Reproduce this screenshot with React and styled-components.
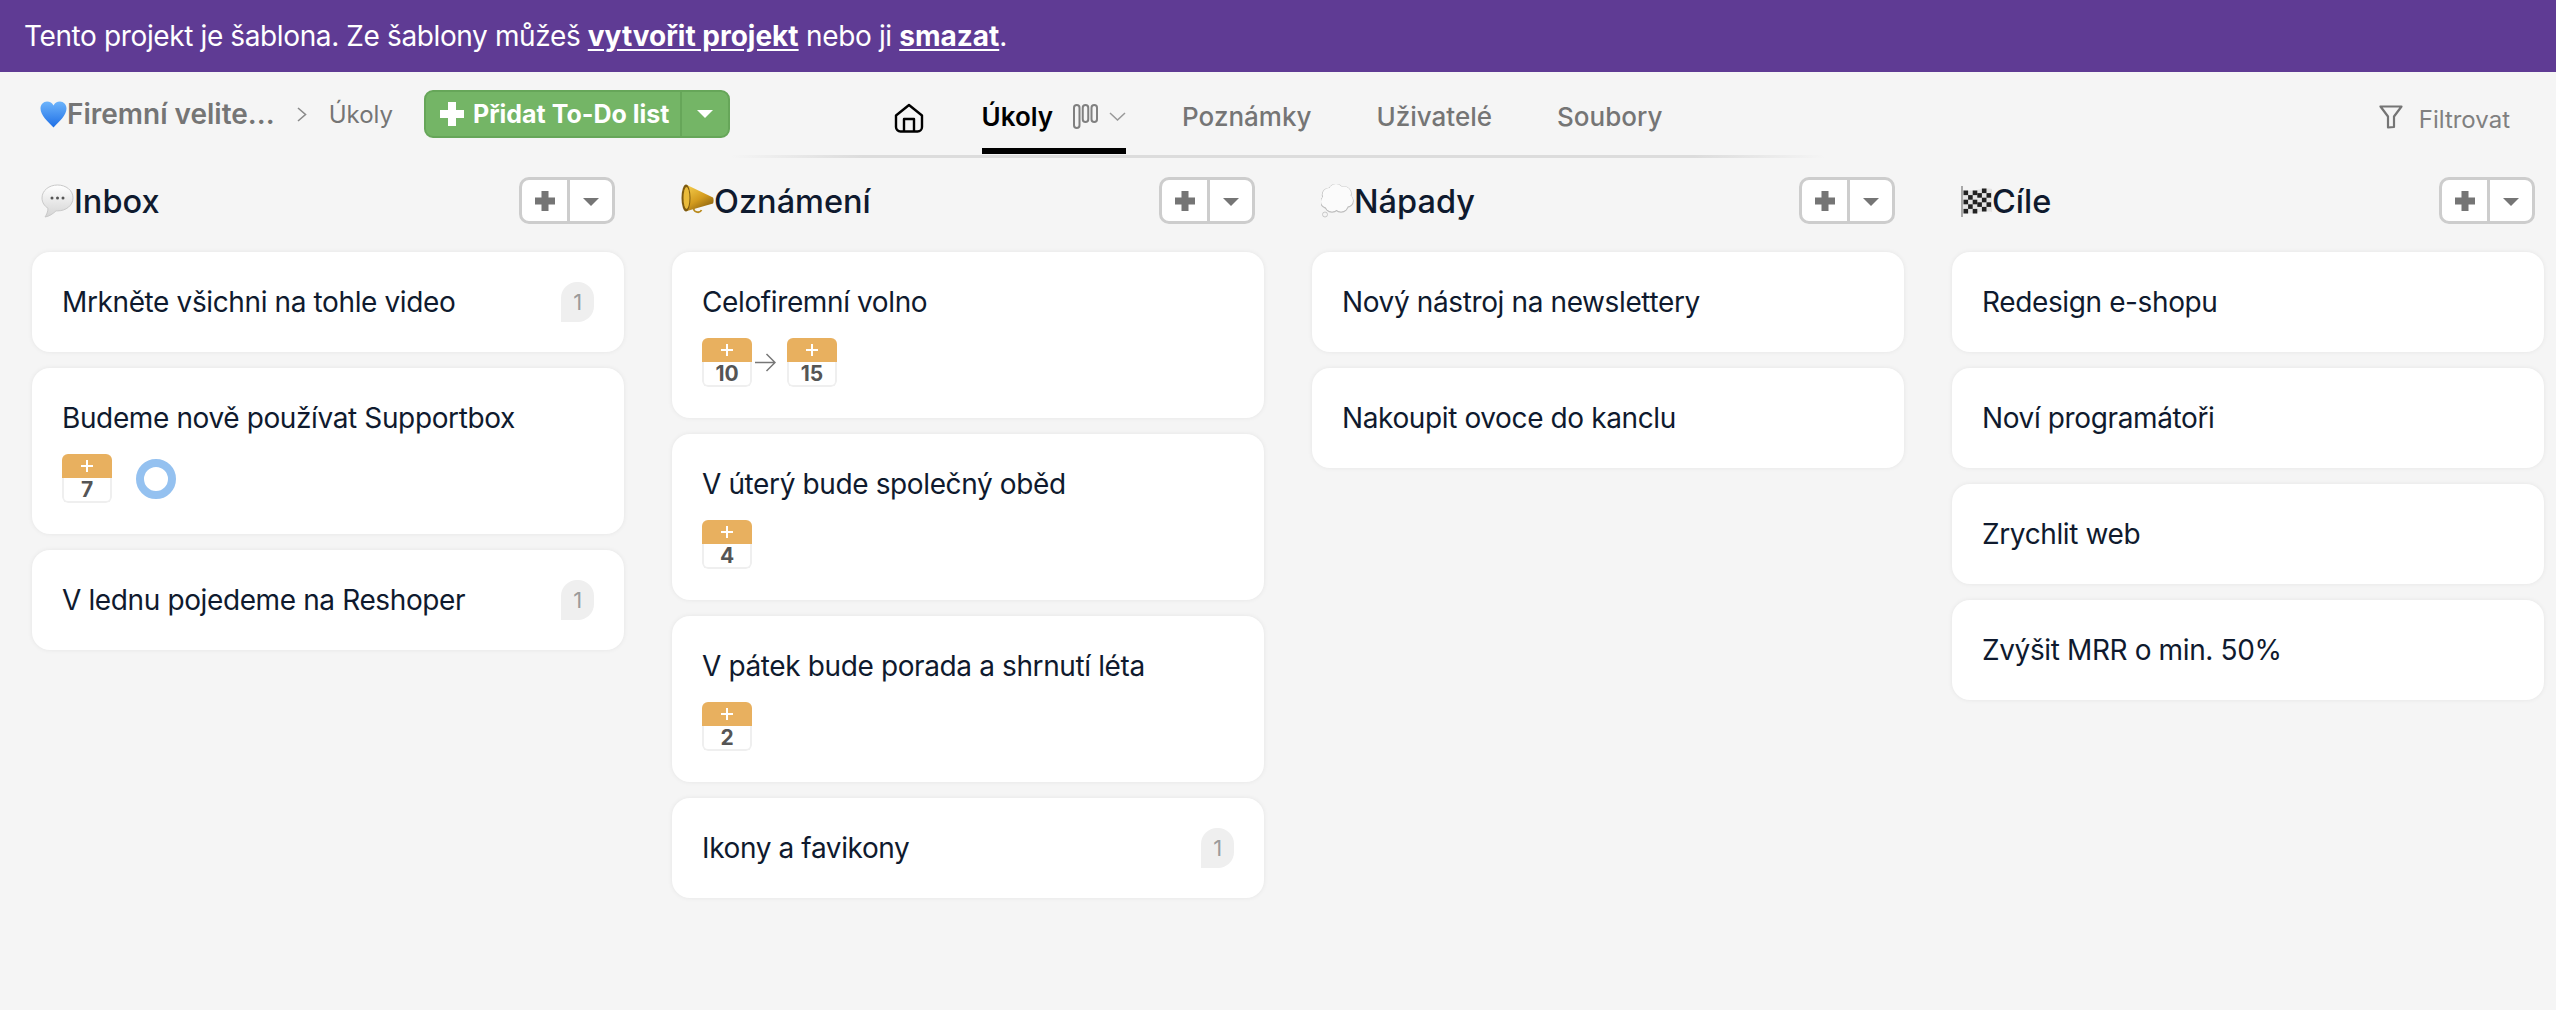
import React from 'react'
import styled, { createGlobalStyle } from 'styled-components'

const GlobalStyle = createGlobalStyle`
html, body {
  margin: 0;
  padding: 0;
  background: #f5f5f5;
  font-family: Inter, "Noto Sans", "Liberation Sans", sans-serif;
}
* { box-sizing: border-box; }
`

const Page = styled.div`
height: 1010px;
overflow: hidden;
background: #f5f5f5;
`

const Banner = styled.div`
height: 72px;
padding: 0 16px 1px 24px;
display: flex;
align-items: center;
background: #5f3b94;
color: #fff;
font-size: 28px;
letter-spacing: -0.38px;
white-space: pre;
`

const BannerLink = styled.a`
font-weight: 700;
letter-spacing: 0;
text-decoration: underline;
text-underline-offset: 3px;
color: #fff;
`

const TopBar = styled.div`
display: grid;
grid-template-columns: 1fr 1094px 1fr;
height: 86px;
`

const LeftGroup = styled.div`
display: flex;
align-items: flex-start;
padding: 18px 0 0 40px;
`

const ProjectName = styled.div`
display: flex;
align-items: center;
height: 48px;
font-size: 28px;
font-weight: 600;
color: #757575;
white-space: nowrap;
`

const Crumb = styled.div`
display: flex;
align-items: center;
height: 48px;
margin-left: 22px;
gap: 22px;
font-size: 24px;
color: #757575;
`

const AddButton = styled.div`
display: flex;
height: 48px;
width: 306px;
margin-left: 31px;
border: 2px solid #66a659;
border-radius: 9px;
background: #74b566;
color: #fff;
`

const AddMain = styled.div`
flex: 1;
display: flex;
align-items: center;
gap: 9px;
padding-left: 14px;
font-size: 25px;
font-weight: 700;
white-space: nowrap;
border-right: 2px solid #66a659;
`

const AddCaret = styled.div`
width: 46px;
display: flex;
align-items: center;
justify-content: center;
`

const NavWrap = styled.div`
display: flex;
justify-content: center;
height: 86px;
background: linear-gradient(90deg, rgba(221,221,221,0) 0%, #dcdcdc 12%, #dcdcdc 88%, rgba(221,221,221,0) 100%) bottom / 100% 3px no-repeat;
`

const Nav = styled.nav`
display: flex;
align-items: flex-start;
`

const HomeLink = styled.div`
width: 30px;
height: 30px;
margin: 31px 58px 0 0;
`

const Tab = styled.div`
display: flex;
align-items: center;
height: 82px;
padding-top: 13px;
margin-right: ${p => p.$gap || 0}px;
font-size: 26px;
font-weight: ${p => (p.$active ? 600 : 500)};
color: ${p => (p.$active ? '#000' : '#757575')};
border-bottom: ${p => (p.$active ? '6px solid #000' : '0')};
padding-bottom: ${p => (p.$active ? 0 : 6)}px;
white-space: nowrap;
`

const TabIcons = styled.div`
display: flex;
align-items: center;
margin-left: 20px;
gap: 11px;
`

const FilterBox = styled.div`
display: flex;
justify-content: flex-end;
align-items: flex-start;
padding: 33px 46px 0 0;
gap: 16px;
font-size: 24px;
color: #808080;
`

const Board = styled.div`
display: flex;
gap: 48px;
padding: 19px 0 0 32px;
`

const Column = styled.section`
flex: 0 0 592px;
display: flex;
flex-direction: column;
gap: 16px;
`

const ColumnHeader = styled.header`
display: flex;
align-items: center;
justify-content: space-between;
height: 47px;
margin-bottom: 12px;
padding: 0 9px;
`

const ColumnTitle = styled.h2`
display: flex;
align-items: center;
margin: 0;
padding-top: 2px;
font-size: 32.5px;
font-weight: 500;
color: #0f1a2e;
`

const ColumnActions = styled.div`
display: flex;
width: 96px;
height: 47px;
border: 3px solid #cdcdcd;
border-radius: 10px;
background: #fff;
`

const ColumnPlus = styled.div`
width: 48px;
display: flex;
align-items: center;
justify-content: center;
border-right: 3px solid #cdcdcd;
`

const ColumnCaret = styled.div`
flex: 1;
display: flex;
align-items: center;
justify-content: center;
padding-top: 3px;
`

const Card = styled.article`
padding: 32px 30px 32px 30px;
background: #fff;
border-radius: 18px;
box-shadow: 0 0 5px rgba(0, 0, 0, 0.07);
`

const CardTop = styled.div`
display: flex;
align-items: center;
justify-content: space-between;
height: 36px;
font-size: 28px;
letter-spacing: -0.38px;
color: #0f1a2e;
line-height: 36px;
`

const Badge = styled.div`
width: 33px;
height: 40px;
display: flex;
align-items: center;
justify-content: center;
border-radius: 16px 16px 16px 0;
background: #efefef;
color: #9b9b9b;
font-size: 22px;
`

const CardMeta = styled.div`
display: flex;
align-items: flex-start;
height: 48px;
margin-top: 18px;
`

const Calendar = styled.div`
width: 50px;
height: 49px;
flex: none;
display: flex;
flex-direction: column;
border-radius: 6px;
overflow: hidden;
background: #fff;
`

const CalendarHead = styled.div`
height: 24px;
flex: none;
display: flex;
align-items: center;
justify-content: center;
background: #e8b05f;
`

const CalendarDay = styled.div`
flex: 1;
display: flex;
align-items: center;
justify-content: center;
border: 2px solid #efefef;
border-top: 0;
border-radius: 0 0 6px 6px;
font-size: 21px;
font-weight: 700;
color: #555;
line-height: 1;
`

const ArrowIcon = styled.svg`
width: 21px;
height: 21px;
margin: 14px 11px 0 3px;
`

const Ring = styled.div`
width: 40px;
height: 40px;
margin: 5px 0 0 24px;
border: 8px solid #94c1f0;
border-radius: 50%;
`

const EmojiSvg = styled.svg`
display: block;
flex: none;
width: ${p => p.$w || 33}px;
height: 34px;
margin-top: -2px;
`

const HeartSvg = styled.svg`
display: block;
flex: none;
width: 27px;
height: 27px;
`

const Plus = ({ size, color, thick }) => {
  const a = (size - thick) / 2
  return (
    <svg width={size} height={size} viewBox={`0 0 ${size} ${size}`}>
      <path d={`M${a} 0h${thick}v${a}h${a}v${thick}h-${a}v${a}h-${thick}v-${a}h-${a}v-${thick}h${a}z`} fill={color} />
    </svg>
  )
}

const Caret = ({ color }) => (
  <svg width="16" height="8" viewBox="0 0 16 8">
    <path d="M0 0h16L8 8z" fill={color} />
  </svg>
)

const Heart = () => (
  <HeartSvg viewBox="0 0 27 27">
    <defs>
      <linearGradient id="heartFill" x1="0" y1="0" x2="0" y2="1">
        <stop offset="0" stopColor="#6db4fb" />
        <stop offset="1" stopColor="#1e6fe6" />
      </linearGradient>
    </defs>
    <path d="M13.500 26.500C8 20.500.5 14.500.5 7.500.5 3.500 3.500.5 7 .5c3 0 5.200 1.600 6.500 4 1.300-2.400 3.500-4 6.500-4 3.500 0 6.500 3 6.500 7 0 7-7.500 13-13 19z" fill="url(#heartFill)" />
  </HeartSvg>
)

const Bubble = () => (
  <EmojiSvg viewBox="0 0 33 34">
    <defs>
      <linearGradient id="bubbleFill" x1="0" y1="0" x2="0" y2="1">
        <stop offset="0" stopColor="#ffffff" />
        <stop offset="1" stopColor="#d4d4d4" />
      </linearGradient>
    </defs>
    <path d="M16.500 1C8 1 1 6.500 1 14c0 4.500 2.500 8 6 10.300C7 27.500 5.500 31 4 33c4-.5 8.500-3.500 11-6.200.5.100 1 .1 1.500.1 8.500 0 15.500-5.500 15.500-13S25 1 16.500 1z" fill="url(#bubbleFill)" stroke="#c9c9c9" strokeWidth="1" />
    <circle cx="11" cy="14" r="1.500" fill="#555" />
    <circle cx="16.500" cy="14" r="1.500" fill="#555" />
    <circle cx="22" cy="14" r="1.500" fill="#555" />
  </EmojiSvg>
)

const Megaphone = () => (
  <EmojiSvg viewBox="0 0 33 34">
    <defs>
      <linearGradient id="hornFill" x1="0" y1="0" x2="0.6" y2="1">
        <stop offset="0" stopColor="#f6cf4e" />
        <stop offset="0.6" stopColor="#d39b1e" />
        <stop offset="1" stopColor="#8f6510" />
      </linearGradient>
    </defs>
    <path d="M13 24a3.800 3 0 1 0 7.500 2" fill="none" stroke="#b98a1e" strokeWidth="1.800" />
    <path d="M6 1l26 12.500c.8 1.500.8 4.500 0 6L6 27z" fill="url(#hornFill)" />
    <ellipse cx="5" cy="14" rx="4.500" ry="13.500" fill="#7d5a10" />
    <ellipse cx="5.500" cy="14" rx="3" ry="11" fill="#eabb3a" />
  </EmojiSvg>
)

const cloudPuffs = [
  [15, 8, 7.500],
  [23, 10, 7],
  [8, 11, 6.500],
  [26, 17, 6],
  [6, 18, 6],
  [20, 21, 7],
  [11, 21, 7],
  [16, 15, 9],
]

const Cloud = () => (
  <EmojiSvg viewBox="0 0 33 34">
    {cloudPuffs.map(([x, y, r]) => (
      <circle key={`o${x}${y}`} cx={x} cy={y} r={r} fill="none" stroke="#bdbdbd" strokeWidth="1.500" />
    ))}
    {cloudPuffs.map(([x, y, r]) => (
      <circle key={`i${x}${y}`} cx={x} cy={y - 0.5} r={r} fill="#fbfbfb" />
    ))}
    <circle cx="4" cy="30.500" r="2.500" fill="#f4f4f4" stroke="#bdbdbd" strokeWidth="0.800" />
  </EmojiSvg>
)

const Flag = () => {
  const cells = []
  for (let r = 0; r < 5; r++) {
    for (let c = 0; c < 6; c++) {
      if ((r + c) % 2 === 0) {
        cells.push(<rect key={`${r}-${c}`} x={2.500 + c * 4.600} y={5.500 + r * 4.600 + (c < 3 ? 1 : -1)} width="4.600" height="4.600" fill="#222" />)
      }
    }
  }
  return (
    <EmojiSvg $w={31} viewBox="0 0 31 34">
      <path d="M2 6c9 3 18-3 29-1v23c-11-2-20 3-29 1z" fill="#e4e4e4" />
      {cells}
      <rect x="0" y="2" width="2" height="31" fill="#a8a8a8" />
    </EmojiSvg>
  )
}

const HomeIcon = () => (
  <svg width="30" height="30" viewBox="0 0 30 30" fill="none" stroke="#000" strokeWidth="2.400" strokeLinejoin="round">
    <path d="M2 12.500L15 2l13 10.500V24a4.500 4.500 0 0 1-4.500 4.500h-17A4.500 4.500 0 0 1 2 24z" />
    <path d="M10 28.500V16h10v12.500" />
  </svg>
)

const BoardIcon = () => (
  <svg width="25" height="25" viewBox="0 0 25 25" fill="none" stroke="#808080" strokeWidth="2">
    <rect x="1" y="1" width="5.500" height="23" rx="2.750" />
    <rect x="9.750" y="1" width="5.500" height="17" rx="2.750" />
    <rect x="18.500" y="1" width="5.500" height="17" rx="2.750" />
  </svg>
)

const ChevronIcon = () => (
  <svg width="17" height="9" viewBox="0 0 17 9" fill="none" stroke="#999" strokeWidth="1.500">
    <path d="M1 1l7.500 7L16 1" />
  </svg>
)

const CrumbChevron = () => (
  <svg width="10" height="15" viewBox="0 0 10 15" fill="none" stroke="#8a8a8a" strokeWidth="1.600">
    <path d="M1 1l7.500 6.500L1 14" />
  </svg>
)

const FilterIcon = () => (
  <svg width="24" height="24" viewBox="0 0 24 24" fill="none" stroke="#757575" strokeWidth="2.200" strokeLinejoin="round">
    <path d="M1.500 1.500h21L15 11.500V22l-6 .5V11.500z" />
  </svg>
)

const Arrow = () => (
  <ArrowIcon viewBox="0 0 21 21" fill="none" stroke="#777" strokeWidth="1.500">
    <path d="M0 10.500h20M11.500 2l8.500 8.500L11.500 19" />
  </ArrowIcon>
)

const CalendarBadge = ({ day }) => (
  <Calendar>
    <CalendarHead>
      <Plus size={12} thick={2} color="#fff" />
    </CalendarHead>
    <CalendarDay>{day}</CalendarDay>
  </Calendar>
)

const columns = [
  {
    title: 'Inbox',
    emoji: <Bubble />,
    cards: [
      { text: 'Mrkněte všichni na tohle video', count: 1 },
      { text: 'Budeme nově používat Supportbox', days: [7], ring: true },
      { text: 'V lednu pojedeme na Reshoper', count: 1 },
    ],
  },
  {
    title: 'Oznámení',
    emoji: <Megaphone />,
    cards: [
      { text: 'Celofiremní volno', days: [10, 15] },
      { text: 'V úterý bude společný oběd', days: [4] },
      { text: 'V pátek bude porada a shrnutí léta', days: [2] },
      { text: 'Ikony a favikony', count: 1 },
    ],
  },
  {
    title: 'Nápady',
    emoji: <Cloud />,
    cards: [{ text: 'Nový nástroj na newslettery' }, { text: 'Nakoupit ovoce do kanclu' }],
  },
  {
    title: 'Cíle',
    emoji: <Flag />,
    cards: [
      { text: 'Redesign e-shopu' },
      { text: 'Noví programátoři' },
      { text: 'Zrychlit web' },
      { text: 'Zvýšit MRR o min. 50%' },
    ],
  },
]

const TodoCard = ({ card }) => (
  <Card>
    <CardTop>
      <span>{card.text}</span>
      {card.count && <Badge>{card.count}</Badge>}
    </CardTop>
    {card.days && (
      <CardMeta>
        {card.days.map((d, i) => (
          <React.Fragment key={d}>
            {i > 0 && <Arrow />}
            <CalendarBadge day={d} />
          </React.Fragment>
        ))}
        {card.ring && <Ring />}
      </CardMeta>
    )}
  </Card>
)

export default function App() {
  return (
    <Page>
      <GlobalStyle />
      <Banner>
        Tento projekt je šablona. Ze šablony můžeš <BannerLink>vytvořit projekt</BannerLink> nebo ji <BannerLink>smazat</BannerLink>.
      </Banner>
      <TopBar>
        <LeftGroup>
          <ProjectName>
            <Heart />
            Firemní velite...
          </ProjectName>
          <Crumb>
            <CrumbChevron />
            Úkoly
          </Crumb>
          <AddButton>
            <AddMain>
              <Plus size={24} thick={8} color="#fff" />
              Přidat To-Do list
            </AddMain>
            <AddCaret>
              <Caret color="#fff" />
            </AddCaret>
          </AddButton>
        </LeftGroup>
        <NavWrap>
          <Nav>
            <HomeLink>
              <HomeIcon />
            </HomeLink>
            <Tab $active $gap={56}>
              Úkoly
              <TabIcons>
                <BoardIcon />
                <ChevronIcon />
              </TabIcons>
            </Tab>
            <Tab $gap={65}>Poznámky</Tab>
            <Tab $gap={65}>Uživatelé</Tab>
            <Tab>Soubory</Tab>
          </Nav>
        </NavWrap>
        <FilterBox>
          <FilterIcon />
          Filtrovat
        </FilterBox>
      </TopBar>
      <Board>
        {columns.map(col => (
          <Column key={col.title}>
            <ColumnHeader>
              <ColumnTitle>
                {col.emoji}
                {col.title}
              </ColumnTitle>
              <ColumnActions>
                <ColumnPlus>
                  <Plus size={20} thick={7} color="#757575" />
                </ColumnPlus>
                <ColumnCaret>
                  <Caret color="#757575" />
                </ColumnCaret>
              </ColumnActions>
            </ColumnHeader>
            {col.cards.map(card => (
              <TodoCard key={card.text} card={card} />
            ))}
          </Column>
        ))}
      </Board>
    </Page>
  )
}
